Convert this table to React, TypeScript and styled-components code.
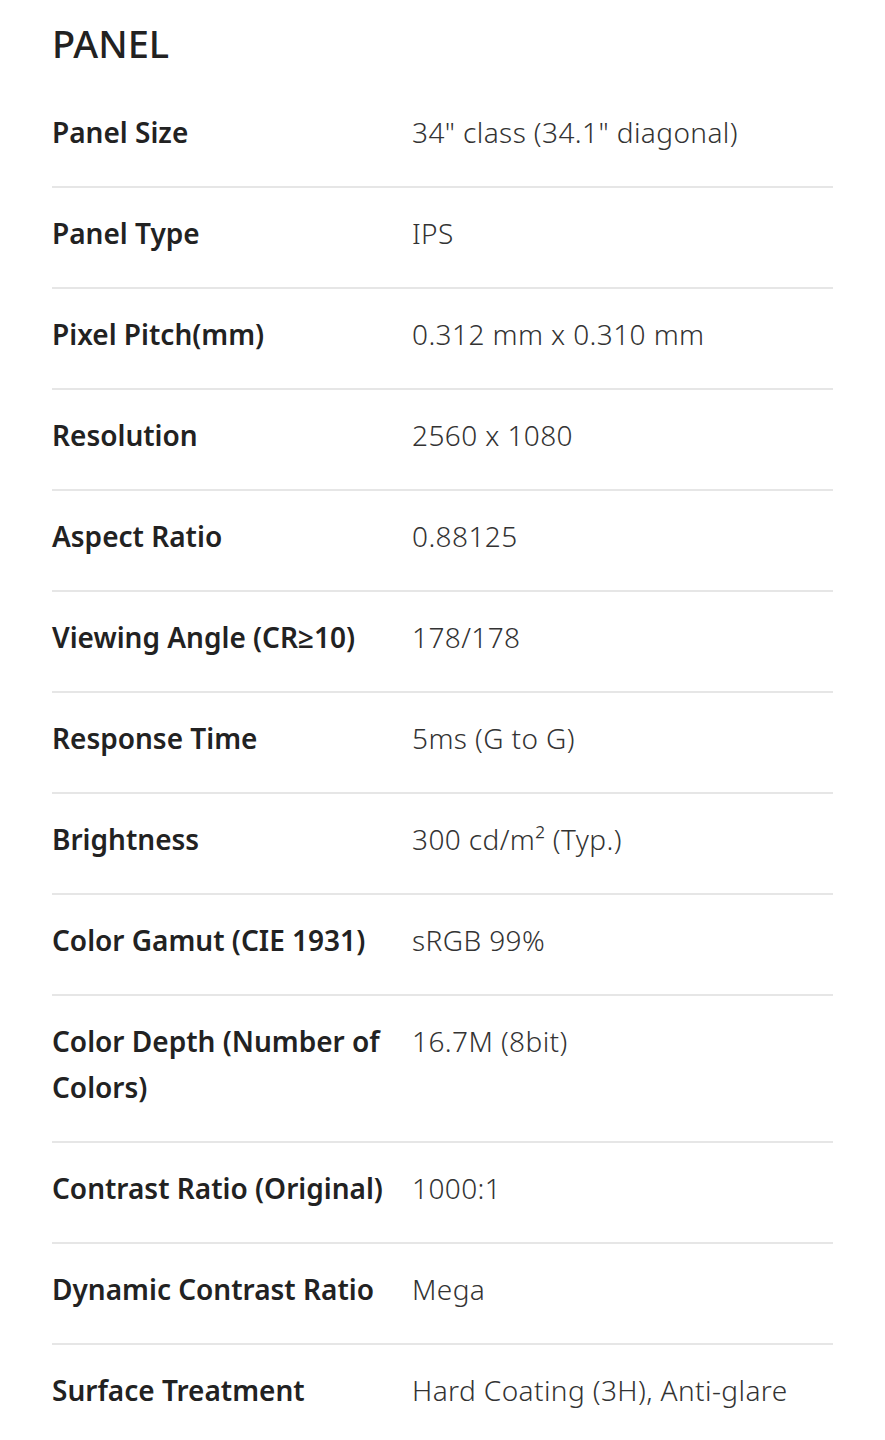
import styled, { createGlobalStyle } from 'styled-components';

const GlobalStyle = createGlobalStyle`
	body {
		margin: 0;
		background: #fff;
		font-family: "Noto Sans", "Open Sans", sans-serif;
		color: #222;
	}
`;

const Section = styled.section`
	padding: 20px 52px 0 52px;
`;

const Title = styled.h2`
	margin: 0;
	font-size: 38px;
	font-weight: 500;
	line-height: 46px;
	color: #222;
`;

const List = styled.dl`
	margin: 21px 0 0 0;
	padding: 0;
`;

const Row = styled.div<{ $last?: boolean }>`
	display: grid;
	grid-template-columns: 360px 1fr;
	padding: 22px 0 31px 0;
	border-bottom: ${p => (p.$last ? 'none' : '2px solid #e6e6e6')};
`;

const Label = styled.dt`
	margin: 0;
	padding-right: 14px;
	font-size: 28px;
	line-height: 46px;
	font-weight: 600;
	color: #222;
`;

const Value = styled.dd`
	margin: 0;
	font-size: 28px;
	line-height: 46px;
	font-weight: 300;
	color: #333;
	letter-spacing: 0.4px;
`;

const specs = [
	['Panel Size', '34" class (34.1" diagonal)'],
	['Panel Type', 'IPS'],
	['Pixel Pitch(mm)', '0.312 mm x 0.310 mm'],
	['Resolution', '2560 x 1080'],
	['Aspect Ratio', '0.88125'],
	['Viewing Angle (CR≥10)', '178/178'],
	['Response Time', '5ms (G to G)'],
	['Brightness', '300 cd/m² (Typ.)'],
	['Color Gamut (CIE 1931)', 'sRGB 99%'],
	['Color Depth (Number of Colors)', '16.7M (8bit)'],
	['Contrast Ratio (Original)', '1000:1'],
	['Dynamic Contrast Ratio', 'Mega'],
	['Surface Treatment', 'Hard Coating (3H), Anti-glare'],
];

const App = () => (
	<>
		<GlobalStyle />
		<Section>
			<Title>PANEL</Title>
			<List>
				{specs.map(([label, value], i) => (
					<Row key={label} $last={i === specs.length - 1}>
						<Label>{label}</Label>
						<Value>{value}</Value>
					</Row>
				))}
			</List>
		</Section>
	</>
);

export default App;
